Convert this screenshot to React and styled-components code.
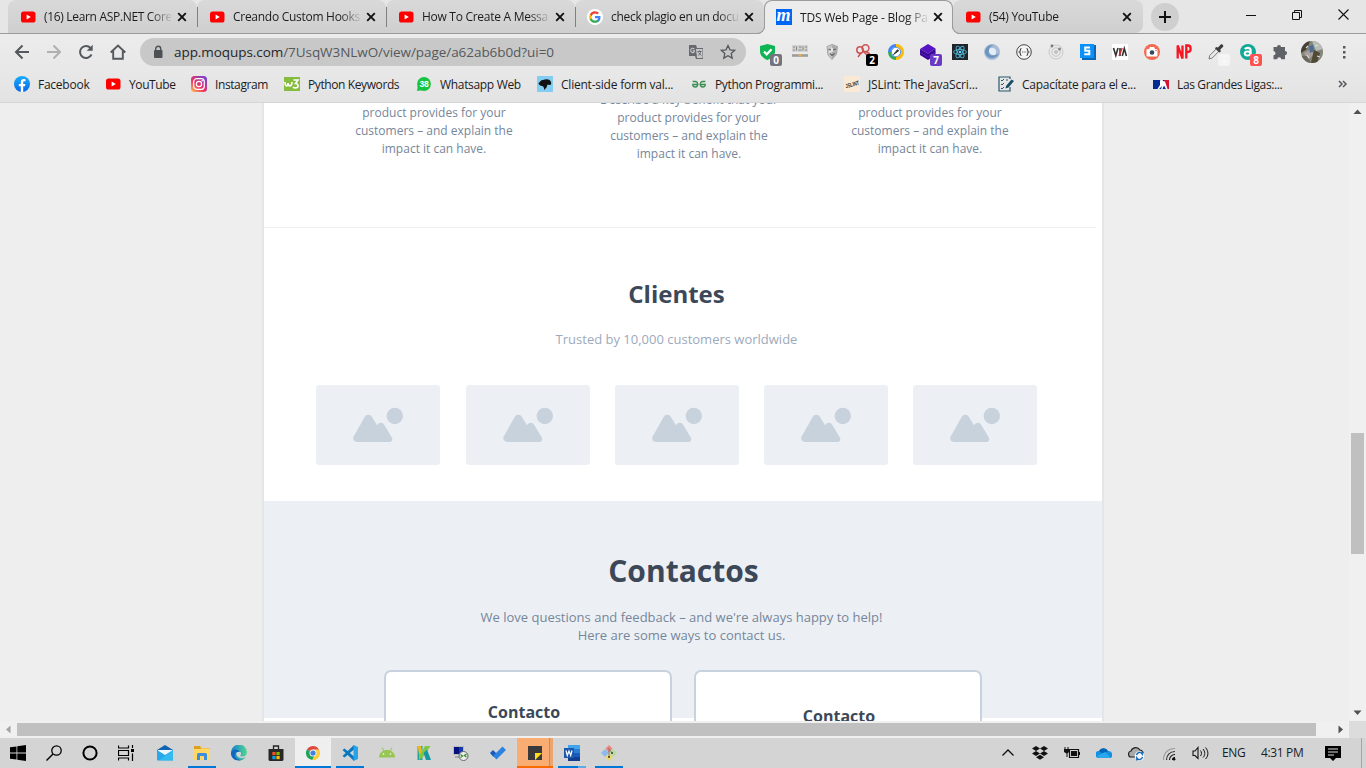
import React from "react";
import styled, { createGlobalStyle, css } from "styled-components";

const Global = createGlobalStyle`
  html, body { margin: 0; padding: 0; overflow: hidden; }
  *, *::before, *::after { box-sizing: border-box; }
  svg { display: block; flex: none; }
  h2, h3, p { margin: 0; }
`;

const ui = css`
  font-family: "Open Sans", "Noto Sans", sans-serif;
  font-size: 12px;
  color: #1c1c1e;
  white-space: nowrap;
`;

const Screen = styled.div`
  width: 1366px;
  height: 768px;
  display: flex;
  flex-direction: column;
  overflow: hidden;
  background: #eeeeee;
`;

/* ---------- tab strip ---------- */
const TabStrip = styled.div`
  ${ui}
  height: 34px;
  display: flex;
  flex: none;
  padding-left: 8px;
  background: #e6e6e6;
  box-shadow: inset 0 -1px #9b9b9b;
`;
const Tab = styled.div`
  position: relative;
  width: ${(p) => p.$w || 189}px;
  height: ${(p) => (p.$active ? 34 : 33)}px;
  display: flex;
  align-items: center;
  padding: 0 0 0 12px;
  background: ${(p) => (p.$active ? "#ececec" : "linear-gradient(#d9d9d9, #cfcfcf)")};
  border-radius: 8px 8px ${(p) => (p.$last ? "8px" : 0)} 0;
  ${(p) => p.$active && css`
    z-index: 2;
    border: 1px solid #9b9b9b;
    border-bottom: 0;
    padding: 0 0 1px 11px;
    &::before, &::after {
      content: "";
      position: absolute;
      bottom: 0;
      width: 8px;
      height: 8px;
      background: transparent;
    }
    &::before { left: -8px; border-right: 1px solid #9b9b9b; border-bottom: 1px solid #9b9b9b; border-radius: 0 0 8px 0; box-shadow: 3px 3px 0 1px #ececec; clip-path: inset(0 -1px 0 0); }
    &::after { right: -8px; border-left: 1px solid #9b9b9b; border-bottom: 1px solid #9b9b9b; border-radius: 0 0 0 8px; box-shadow: -3px 3px 0 1px #ececec; clip-path: inset(0 0 0 -1px); }
  `}
`;
const Divider = styled.i`
  position: absolute;
  z-index: 3;
  right: -1px;
  top: 7px;
  width: 1px;
  height: 20px;
  background: #808080;
`;
const TabTitle = styled.span`
  width: 127px;
  margin-left: 8px;
  overflow: hidden;
  letter-spacing: ${(p) => p.$ls || 0}px;
  mask-image: linear-gradient(90deg, #000 84%, transparent 102%);
`;
const TabClose = styled.span`
  display: flex;
  margin-left: 6px;
`;
const NewTab = styled.div`
  width: 28px;
  height: 28px;
  margin: 3px 0 0 8px;
  border-radius: 50%;
  background: #cfcfcf;
  display: grid;
  place-items: center;
`;
const WindowButtons = styled.div`
  margin-left: 49px;
  height: 29px;
  display: flex;
`;
const WindowButton = styled.div`
  width: 46px;
  display: grid;
  place-items: center;
`;

/* ---------- toolbar ---------- */
const Toolbar = styled.div`
  ${ui}
  height: 36px;
  flex: none;
  display: flex;
  align-items: center;
  padding-left: 6px;
  background: linear-gradient(#ececec, #e8e8e8);
`;
const Slot = styled.div`
  position: relative;
  width: ${(p) => p.$w || 32}px;
  height: ${(p) => p.$h || 32}px;
  flex: none;
  display: grid;
  place-items: center;
`;
const Extensions = styled.div`
  display: flex;
`;
const Omnibox = styled.div`
  width: 606px;
  height: 28px;
  margin: 0 6px;
  padding-left: 12px;
  border-radius: 14px;
  background: #c8c8c8;
  display: flex;
  align-items: center;
`;
const Url = styled.span`
  margin-left: 10px;
  width: 500px;
  font-size: 13.5px;
  line-height: 20px;
  padding-bottom: 1px;
  letter-spacing: ${(p) => p.$ls}px;
  color: #55585c;
  b { font-weight: 400; color: #252629; }
`;
const Badge = styled.span`
  position: absolute;
  left: 18px;
  top: 18px;
  width: 12px;
  height: 12px;
  border-radius: 2px;
  background: ${(p) => p.$bg};
  color: #fff;
  font: 700 10px/12px "Open Sans", sans-serif;
  text-align: center;
`;
const MoqupsMark = styled.span`
  width: 16px;
  height: 16px;
  background: #0067f4;
  color: #fff;
  font: italic 700 18px/13px "Liberation Serif", serif;
  text-align: center;
  text-indent: -1px;
`;

/* ---------- bookmarks ---------- */
const Bookmarks = styled.div`
  ${ui}
  height: 33px;
  flex: none;
  display: flex;
  align-items: center;
  padding: 0 0 5px 14px;
  background: linear-gradient(#e8e8e8, #e3e3e3);
  box-shadow: inset 0 -1px #d6d6d6;
`;
const Bookmark = styled.div`
  width: ${(p) => p.$w}px;
  display: flex;
  align-items: center;
  gap: 8px;
  flex: none;
  letter-spacing: ${(p) => p.$ls}px;
`;

/* ---------- page viewport ---------- */
const Viewport = styled.div`
  height: 618px;
  flex: none;
  display: flex;
  justify-content: space-between;
`;
const Canvas = styled.main`
  width: 842px;
  height: 618px;
  margin-left: 262px;
  overflow: hidden;
  background: #fff;
  border: solid #e3e5e7;
  border-width: 0 2px;
  font-family: "Open Sans", sans-serif;
  text-align: center;
  font-size: 13px;
  line-height: 18px;
`;
const Benefits = styled.section`
  width: 832px;
  height: 125px;
  border-bottom: 1px solid #eeeeee;
  display: flex;
  padding-left: 70px;
`;
const Benefit = styled.p`
  width: ${(p) => p.$w}px;
  margin-top: ${(p) => p.$top}px;
  font-size: 12px;
  line-height: 18px;
  color: #76869a;
  white-space: pre-line;
`;
const Clients = styled.section`
  height: 273px;
  padding: 46px 13px 0 0;
`;
const Title = styled.h2`
  font-weight: 700;
  color: #3c4858;
  font-size: ${(p) => p.$size}px;
  line-height: 40px;
  padding-left: ${(p) => p.$shift || 0}px;
`;
const Trusted = styled.p`
  margin-top: 16px;
  color: #9daabb;
`;
const Placeholders = styled.div`
  display: flex;
  gap: 25.25px;
  margin: 37px 0 0 52.4px;
`;
const Placeholder = styled.div`
  width: 124px;
  height: 80px;
  flex: none;
  border-radius: 3px;
  background: #ecf0f5;
  padding: 22px 0 0 36px;
`;
const Contacts = styled.section`
  height: 217px;
  background: #ecf0f5;
  padding-top: 50px;
`;
const Intro = styled.p`
  margin-top: 17px;
  padding-right: 3px;
  color: #76869a;
  white-space: pre-line;
`;
const Cards = styled.div`
  display: flex;
  gap: 22px;
  margin: 26px 0 0 120px;
`;
const Card = styled.article`
  width: 288px;
  height: 140px;
  flex: none;
  border: 2px solid #c8d2df;
  border-radius: 7px;
  background: #fff;
  padding: ${(p) => p.$pad};
`;
const CardTitle = styled.h3`
  font-size: 16px;
  line-height: 24px;
  font-weight: 700;
  color: #3c4858;
`;

/* ---------- scrollbars ---------- */
const VScroll = styled.div`
  width: 17px;
  height: 618px;
  background: #f0f0f0;
  display: flex;
  flex-direction: column;
  align-items: center;
`;
const HScroll = styled.div`
  height: 17px;
  flex: none;
  display: flex;
  align-items: center;
  background: #f0f0f0;
`;
const Thumb = styled.div`
  width: ${(p) => p.$w}px;
  height: ${(p) => p.$h}px;
  flex: none;
  background: #c0c0c0;
  margin: ${(p) => p.$m || 0};
`;
const Corner = styled.div`
  width: 17px;
  height: 17px;
  margin-left: auto;
  background: #dcdcdc;
`;

/* ---------- taskbar ---------- */
const Taskbar = styled.footer`
  ${ui}
  height: 30px;
  flex: none;
  display: flex;
  background: #d4d4d4;
`;
const Task = styled.div`
  position: relative;
  width: ${(p) => p.$w || 37}px;
  height: 30px;
  flex: none;
  display: grid;
  place-items: center;
`;
const Fill = styled.div`
  width: 36px;
  height: 30px;
  background: ${(p) => p.$bg};
  box-shadow: ${(p) => p.$edge || "none"};
  display: grid;
  place-items: center;
`;
const Underline = styled.i`
  position: absolute;
  bottom: 0;
  left: 50%;
  width: ${(p) => p.$w || 28}px;
  height: 2px;
  transform: translateX(-50%);
  background: ${(p) => p.$bg || "#0078d7"};
`;
const TraySpace = styled.div`
  width: 364px;
  flex: none;
`;
const TrayText = styled.span`
  width: ${(p) => p.$w}px;
  padding-left: ${(p) => p.$pl || 0}px;
  line-height: 30px;
  letter-spacing: ${(p) => p.$ls}px;
`;
const ShowDesktop = styled.i`
  width: 5px;
  margin-left: auto;
  border-left: 1px solid #a6a6a6;
`;

/* ---------- drawings ---------- */
const Svg = ({ s = 16, w, h, box, children, ...r }) => (
  <svg width={w || s} height={h || s} viewBox={box || `0 0 ${w || s} ${h || s}`} fill="none" {...r}>{children}</svg>
);
const YouTube = () => (
  <Svg><rect x="1" y="2.5" width="14.5" height="11" rx="2.6" fill="#f00" /><path d="M6.6 5.6 10.8 8l-4.2 2.4z" fill="#fff" /></Svg>
);
const Google = () => (
  <Svg s={16} box="1 1 22 22">
    <circle cx="12" cy="12" r="11" fill="#fff" />
    <path d="M19.6 12.2c0-.6-.1-1.100-.2-1.600H12v3.100h4.300c-.2 1-.8 1.900-1.600 2.400v2h2.600c1.500-1.400 2.300-3.400 2.300-5.900z" fill="#4285f4" />
    <path d="M12 20c2.200 0 4-.7 5.300-1.900l-2.600-2c-.7.5-1.600.8-2.700.8-2.100 0-3.800-1.400-4.500-3.300H4.800v2.100C6.200 18.300 8.900 20 12 20z" fill="#34a853" />
    <path d="M7.500 13.600a4.800 4.800 0 0 1 0-3.100V8.400H4.800a8 8 0 0 0 0 7.300z" fill="#fbbc05" />
    <path d="M12 7.200c1.200 0 2.300.4 3.100 1.200l2.300-2.300A8 8 0 0 0 4.800 8.400l2.700 2.100C8.200 8.600 9.900 7.200 12 7.200z" fill="#ea4335" />
  </Svg>
);
const Close = () => <Svg s={10}><path d="m1.200 1.200 7.600 7.600m0-7.600L1.200 8.800" stroke="#111" strokeWidth="1.900" /></Svg>;

const tabs = [
  { icon: <YouTube />, title: "(16) Learn ASP.NET Core", sep: true, ls: -0.32 },
  { icon: <YouTube />, title: "Creando Custom Hooks", sep: true, ls: -0.28 },
  { icon: <YouTube />, title: "How To Create A Messa", sep: true, ls: -0.28 },
  { icon: <Google />, title: "check plagio en un docu", ls: -0.3 },
  { icon: <MoqupsMark>m</MoqupsMark>, title: "TDS Web Page - Blog Pa", active: true, ls: -0.2 },
  { icon: <YouTube />, title: "(54) YouTube", last: true, ls: -0.3 },
];

const extensions = [
  [<Svg><path d="M7.500 0 15 2v5.500c0 4-3.500 7-7.500 8.500C3.500 14.500 0 11.500 0 7.500V2z" fill="#0fb455" /><path d="m4 7.500 2.700 2.800L11.500 5.300" stroke="#fff" strokeWidth="2.200" /></Svg>, "0", "#74747e"],
  [<Svg><rect y="1" width="16" height="7" fill="#d2d2d2" /><path d="M1 3h2M4.500 2.500v4M7 3h2.500M11 2.500v4M13 3h2M1 6h2M6.500 6h3M13 6h2" stroke="#858585" strokeWidth="1" /><path d="M0 11h16" stroke="#aaa" strokeWidth="2" /><path d="M0 12.200h16" stroke="#777" strokeWidth=".8" /><circle cx="8" cy="11.200" r="1.500" fill="#e5b045" /></Svg>],
  [<Svg><path d="M3 2.500 8 .5l5.500 2-1 7.500L8 15.500 4 11z" fill="#c9c9c9" stroke="#a3a3a3" /><path d="M8 1l5 2-1 7-4 5z" fill="#999" opacity=".6" /><path d="m4.500 5 2.500 1M9 6l3-1M6 9.500l2 2 2.500-2" stroke="#666" strokeWidth="1.200" /><path d="M5 8h2l1-4 1 4" stroke="#eee" /></Svg>],
  [<Svg><g stroke="#cb5353" strokeWidth="1.500"><circle cx="4" cy="6" r="3.200" /><circle cx="9.500" cy="4.200" r="3.400" /><path d="M5 9 2 13M7 7l4 4M10 7.500l4 2.500" /></g></Svg>, "2", "#000"],
  [<Svg><circle cx="8" cy="8" r="6.500" fill="#fff" /><path d="M8 1.500A6.500 6.500 0 0 1 14.500 8" stroke="#fbbc05" strokeWidth="3" /><path d="M14.500 8A6.500 6.500 0 0 1 8 14.500" stroke="#fbbc05" strokeWidth="3" /><path d="M8 14.500A6.500 6.500 0 0 1 1.500 8" stroke="#35a853" strokeWidth="3" /><path d="M1.500 8A6.500 6.500 0 0 1 8 1.500" stroke="#4285f4" strokeWidth="3" /><circle cx="8" cy="8" r="5" fill="#4285f4" /><circle cx="8" cy="8" r="4.200" fill="#fff" /><path d="m5.500 10.500 4-4.800 1.200 1.100z" fill="#333" stroke="#333" /></Svg>],
  [<Svg><path d="m0 5 8-5 7.500 4.500-7.500 5z" fill="#5712c4" /><path d="m0 5 8 4.500 7.500-5v6L8 16 0 11z" fill="#390a93" /><path d="m0 8.500 8 4.500 7.500-5" stroke="#5712c4" /></Svg>, "7", "#6a3ac4"],
  [<Svg><rect width="16" height="16" fill="#20232a" /><g stroke="#51b6d3" strokeWidth=".9"><ellipse cx="8" cy="8" rx="6.500" ry="2.500" /><ellipse cx="8" cy="8" rx="6.500" ry="2.500" transform="rotate(60 8 8)" /><ellipse cx="8" cy="8" rx="6.500" ry="2.500" transform="rotate(120 8 8)" /></g><circle cx="8" cy="8" r="1.300" fill="#61dafb" /></Svg>],
  [<Svg><circle cx="8" cy="8" r="6" stroke="#a7bdd6" strokeWidth="4" /><path d="M2 11a7 7 0 0 1 8-10c-5 1-6 6-4 8 2 3 6 3 9 0-1 4-8 8-13 2z" fill="#5684b5" opacity=".75" /><circle cx="8.500" cy="7.500" r="3.200" fill="#e4edf5" /></Svg>],
  [<Svg><circle cx="8" cy="8" r="7.300" fill="#f5f5f5" stroke="#444" /><path d="M5.500 4.500c-2 0-.5 3-2 3.500 1.500.5 0 3.500 2 3.500m5-7c2 0 .5 3 2 3.500-1.500.5 0 3.500-2 3.500M6 8h.8M7.700 8h.8M9.400 8h.8" stroke="#444" strokeWidth="1.200" /></Svg>],
  [<Svg><circle cx="8" cy="8" r="7" stroke="#c8c8c8" /><circle cx="8" cy="8" r="4.200" stroke="#c4c4c4" /><circle cx="8" cy="8" r="2" fill="#c1c1c1" /><circle cx="4" cy="2" r="1.400" fill="#777" /><circle cx="11.500" cy="5" r="1.500" fill="#888" /></Svg>],
  [<Svg><path d="M13 1h3v15H2v-3z" fill="#0868b7" /><rect width="14" height="14" fill="#0c91f8" /><path d="M10 3.500H5.200v3.200h4.100v3.500H4.300" stroke="#fff" strokeWidth="2" /></Svg>],
  [<Svg><rect width="16" height="16" rx="1" fill="#fff" /><path d="m1.500 4 2.300 7.500L6 4M8 4v8M10.300 12l2-7.500 2.100 7.500" stroke="#333" strokeWidth="1.600" /><path d="m7 12 3.200-8" stroke="#da2830" strokeWidth="1.400" /></Svg>],
  [<Svg><circle cx="8" cy="8" r="8" fill="#f36a50" /><rect x="2.500" y="5" width="11" height="7.500" rx="1" fill="#fff" /><path d="M5 5 6 3h4l1 2z" fill="#fff" /><circle cx="8" cy="8.500" r="2.300" fill="#34495e" /><circle cx="12" cy="6.500" r=".8" fill="#f36a50" /></Svg>],
  [<Svg><path d="M1.700 14.500v-13l4.800 13v-13M10.300 14.500v-13h1.700c3.500 0 3.500 6.500 0 6.500h-1.700" stroke="#f51622" strokeWidth="2.300" /></Svg>],
  [<Svg><path d="m1 15 .7-3.500 7-7 2.500 2.500-7 7z" fill="#e9e9e9" stroke="#777" /><path d="m8 3 2 .5L12.500.7c1.500-1.500 3.800.9 2.400 2.400l-2.600 2.500.5 2-1.500 1L7 4.500z" fill="#3d3d3d" /></Svg>, "-", "#f4f4f4"],
  [<Svg><circle cx="8" cy="8" r="8" fill="#10a898" /><path d="M4.800 5c2-2 5.800-1.500 5.800 1.500V12" stroke="#fff" strokeWidth="2.200" /><ellipse cx="7.500" cy="9.500" rx="2.800" ry="2" stroke="#fff" strokeWidth="2" /></Svg>, "8", "#fb5252"],
  [<Svg><path d="M5 3a2 2 0 0 1 4 0h4v4a2.100 2.100 0 0 1 0 4.200v4h-3.800a2 2 0 0 0-4 0H1.500v-4a2 2 0 0 0 0-4V3z" fill="#5f6368" /></Svg>],
];

const bookmarks = [
  { w: 91, ls: -0.25, t: "Facebook", i: <Svg><defs><linearGradient id="fb" x2="0" y2="1"><stop stopColor="#19afff" /><stop offset="1" stopColor="#0866e8" /></linearGradient></defs><circle cx="8" cy="8" r="8" fill="url(#fb)" /><path d="M6.800 16v-5.700h-2V8h2V6.300c0-2.100 1.200-3.200 3-3.200l1.700.2v1.900h-1c-1 0-1.300.6-1.300 1.200V8h2.200l-.4 2.300H9.200V16z" fill="#fff" /></Svg> },
  { w: 86, ls: -0.4, t: "YouTube", i: <YouTube /> },
  { w: 93, ls: -0.4, t: "Instagram", i: <Svg><defs><linearGradient id="ig" x1="0" y1="1" x2=".9" y2="0"><stop stopColor="#ffc64f" /><stop offset=".45" stopColor="#ed3265" /><stop offset="1" stopColor="#6944d9" /></linearGradient></defs><rect width="16" height="16" rx="3.500" fill="url(#ig)" /><rect x="2.700" y="2.700" width="10.600" height="10.600" rx="3" stroke="#fff" strokeWidth="1.200" /><circle cx="8" cy="8" r="2.600" stroke="#fff" strokeWidth="1.200" /><circle cx="11.200" cy="4.800" r=".8" fill="#fff" /></Svg> },
  { w: 132, ls: -0.4, t: "Python Keywords", i: <Svg><rect y="1" width="16" height="14" fill="#87bd3f" /><path d="M1 6c0 5 3 5 3 1 0 4 4 4 4-1m1.500-2h4.500l-2.500 3.500c3.500 0 3.500 4.500-.2 4.500-1 0-1.800-.4-2.200-1.200" stroke="#fff" strokeWidth="1.600" /></Svg> },
  { w: 121, ls: -0.32, t: "Whatsapp Web", i: <Svg><path d="M2 9 1 15l6-1z" fill="#15c541" /><circle cx="8" cy="8" r="6.900" fill="#15c541" /><text x="8" y="10.900" textAnchor="middle" fill="#fff" fontSize="8.500" fontWeight="700" fontFamily="Liberation Sans">38</text></Svg> },
  { w: 154, ls: -0.22, t: "Client-side form val...", i: <Svg><rect width="16" height="16" fill="#83cdf1" /><path d="M1.500 7.500C3 6 3.500 4 6 4c2-1 5-1.200 6.500 0 1.500 1 2 3 1.500 4.500l-2 .5-1.500-.5-1 3-2.500 2.500C7.500 11.500 6 10 5 10 3.500 10 2 9 1.500 7.500z" fill="#111" /></Svg> },
  { w: 153, ls: -0.35, t: "Python Programmi...", i: <Svg><path d="M7.500 8.500H1.200m13.600 0H8.500M1.700 5.500h2.500c3.500 0 3 5.500.2 5.500-1.800 0-2.700-1-2.700-2.500m12.600-3h-2.500c-3.500 0-3 5.500-.2 5.500 1.800 0 2.700-1 2.700-2.500" stroke="#398d50" strokeWidth="1.300" /></Svg> },
  { w: 154, ls: -0.15, t: "JSLint: The JavaScri...", i: <Svg><rect width="16" height="16" fill="#faead5" /><text x="8" y="10.500" textAnchor="middle" transform="rotate(-16 8 8)" fill="#3b332c" fontSize="6" fontWeight="700" fontFamily="Liberation Sans" textLength="14" lengthAdjust="spacingAndGlyphs">JSLINT</text></Svg> },
  { w: 155, ls: -0.26, t: "Capacítate para el e...", i: <Svg><path d="M12 3V1H1v14h11v-4" stroke="#28596b" strokeWidth="1.200" /><path d="m3 4 1 1 2-2M3 8l1 1 2-2M3 12l1 1 2-2M8 4h2" stroke="#28596b" /><path d="m8 10 5.500-6.500L16 5l-5.500 6.500-3 1z" fill="#174f65" /></Svg> },
  { w: 160, ls: -0.37, t: "Las Grandes Ligas:...", i: <Svg><rect y="4" width="16" height="9" fill="#002d91" /><path d="M11 4h5v9h-2z" fill="#d51532" /><path d="M7 5.500a1.500 1.500 0 0 1 3-.5l2 .5.5 1.500 2 6h-1.500L11 9.500 9.500 13H8.200L9 10l-3 3H4.500L7 9z" fill="#fff" /></Svg> },
];

const Arrow = ({ d, c = "#505050" }) => <Svg s={17}><path d={d} fill={c} /></Svg>;
const Mountains = () => (
  <Svg w={52} h={36}>
    <path d="M1.700 29.500 12.500 10.200c1.800-3.200 5.800-3.200 7.600 0L25 18.300c2-3.100 5.500-3.300 7.300-.3l7.500 12.500c1.400 2.500-.3 4.500-2.300 4.500h-32C2 35 .2 32 1.700 29.500z" fill="#c8d2dd" />
    <circle cx="42.800" cy="9" r="8.200" fill="#c8d2dd" />
  </Svg>
);
const benefit = "product provides for your\ncustomers – and explain the\nimpact it can have.";

const ChromeLogo = () => <Svg><circle cx="8" cy="8" r="7" fill="#fff" /><path d="M8 8 1.900 4.500A7 7 0 0 1 14.200 4.700H8z" fill="#df4a3e" /><path d="M8 8h0L1.900 4.500A7 7 0 0 0 7.400 15L10 10z" fill="#20a35a" /><path d="M10 10 7.400 15A7 7 0 0 0 14.200 4.700H8z" fill="#fdcd3d" /><circle cx="8" cy="8" r="3.500" fill="#f4f4f4" /><circle cx="8" cy="8" r="2.600" fill="#3f7fe8" /></Svg>;

const tasks = [
  { w: 36, i: <Svg><path d="M0 2.300 6.500 1.400v6.200H0zm7.300-1L16 0v7.600H7.300zM0 8.400h6.500v6.200L0 13.700zm7.300 0H16V16l-8.700-1.200z" fill="#000" /></Svg> },
  { w: 36, i: <Svg><circle cx="10.500" cy="5.500" r="4.700" stroke="#000" strokeWidth="1.300" /><path d="M7 9 .5 15.500" stroke="#000" strokeWidth="1.400" /></Svg> },
  { w: 36, i: <Svg><circle cx="8" cy="8" r="6.600" stroke="#000" strokeWidth="2" /></Svg> },
  { w: 36, i: <Svg><path d="M.5.500V3h10V.5M.5 15.500V13h10v2.500M.5 5.500h10v5H.5zM14.500 0v3M14.500 8.500V16" stroke="#000" strokeWidth="1.200" /><path d="M13 4h3v3h-3z" fill="#000" /></Svg> },
  { w: 41, i: <Svg><path d="M0 5 8 0l8 5v10H0z" fill="#0f63b1" /><path d="M1 5h14v6H1z" fill="#edf7fc" /><path d="m0 5 8 5 8-5v10.500H0z" fill="#28a8ea" /><path d="M16 5v10.500H2z" fill="#38c2f2" opacity=".7" /></Svg> },
  { w: 34, u: 1, i: <Svg><path d="M0 1h6l2 2h8v12H0z" fill="#f4c34c" /><path d="M0 1h6l1 3H0z" fill="#dda01d" /><path d="M0 4h16v11H0z" fill="#ffd867" /><path d="M3 9.500A1.500 1.500 0 0 1 4.500 8h7A1.500 1.500 0 0 1 13 9.500V15h-3v-4H6v4H3z" fill="#3b8edb" /></Svg> },
  { w: 40, i: <Svg><defs><linearGradient id="edge" x2="1"><stop stopColor="#1380d5" /><stop offset="1" stopColor="#54d68c" /></linearGradient></defs><path d="M0 8a8 8 0 0 1 16-1c0 3-2 4.500-5 4.500-2 0-2-1-1-2 .6-2-1-3-2.500-3C4 6.500 4.500 13 10.500 13c2 0 3-.5 4-1A8 8 0 0 1 0 8z" fill="url(#edge)" /><path d="M0 8c1.500-5 7.500-4 9-1-3-1-5 1-5 3.500 0 2 2 4 5 4.500 2.500 0 4-1.500 5.500-3C10 18 0 16 0 8z" fill="#1268bd" /></Svg> },
  { w: 34, i: <Svg><path d="M5.500 4V1h5v3" stroke="#222" strokeWidth="1.300" /><path d="M.5 4h15v11l-1 1h-13l-1-1z" fill="#282828" /><path d="M4.300 7h3.300v3.200H4.300z" fill="#f25022" /><path d="M8.400 7h3.300v3.200H8.400z" fill="#7fba00" /><path d="M4.300 11h3.300v3.200H4.300z" fill="#00a4ef" /><path d="M8.400 11h3.300v3.200H8.400z" fill="#ffb900" /></Svg> },
  { w: 40, bg: "#efefef", u: 36, i: <ChromeLogo /> },
  { w: 34, u: 1, i: <Svg><path d="M12 0v4.500L2.500 12.500.5 11zM.5 5l2-1.500L12 11.500V16z" fill="#0877bf" /><path d="m11.500 0 4.500 2v12l-4.500 2z" fill="#27a4e7" /></Svg> },
  { w: 40, i: <Svg><path d="M0 12.500c0-10 16-10 16 0z" fill="#97c653" /><path d="m3 2.500 2 3.500m8-3.500-2 3.500" stroke="#97c653" /><circle cx="4.500" cy="9" r=".8" fill="#fff" /><circle cx="11.500" cy="9" r=".8" fill="#fff" /></Svg> },
  { w: 34, i: <Svg><path d="M1.500 1h5v14h-5z" fill="#24a39a" /><path d="M1.500 1H5l1.500 7-3 3z" fill="#e9b928" /><path d="M9 1h5.500L7 12l-4 3v-4z" fill="#7fc942" /><path d="M7.500 8 11 4.500 15 15h-5z" fill="#1698a2" /></Svg> },
  { w: 40, i: <Svg><rect x=".5" y="1.500" width="10" height="8" fill="#173aaa" stroke="#bbb" /><path d="M1 2h5v7H1z" fill="#07107f" /><path d="M2 11h8v2H2z" fill="#aaa" /><circle cx="10.500" cy="11" r="4.500" fill="#eee" stroke="#666" /><path d="m7.500 9.500 2 1.500-2 1.500m6-3.500-2 1.500 2 1.500" stroke="#388b2c" strokeWidth="1.300" /></Svg> },
  { w: 34, i: <Svg><path d="m0 8 3-3 4 4-3.500 3z" fill="#185abd" /><path d="m3 11 9.500-9.500 3.500 3.500-9.500 9.500z" fill="#2e82df" /></Svg> },
  { w: 40, bg: "#f9ad73", edge: "inset -3px 0 #eca56e, inset -4px 0 #c98a59", ub: "#f76b00", u: 36, i: <Svg s={14}><path d="M0 0h14v7l-7 7H0z" fill="#3a3a3a" /><path d="M14 7v7H7z" fill="#3a3a3a" /><path d="M7 14V7h7z" fill="#ffdd19" /></Svg> },
  { w: 34, u: 1, ub: "linear-gradient(90deg,#0078d7 20px,#5ca9e4 20px)", i: <Svg><path d="M4 0h12v16H4z" fill="#2b7cd3" /><path d="M4 0h12v4H4z" fill="#41a5ee" /><path d="M4 8h12v4H4z" fill="#185abd" /><path d="M4 12h12v4H4z" fill="#103f91" /><path d="M0 3h10v10H0z" fill="#1e58ad" /><path d="m2 5.500 1.300 5L5 6l1.700 4.500L8 5.500" stroke="#fff" strokeWidth="1.200" /></Svg> },
  { w: 39, u: 1, i: <Svg><path d="m8 0 3.500 3.500-3.500 4-3.500-4z" fill="#ef847e" /><path d="m4 4 4 4-4 4-4-4z" fill="#8db9eb" /><path d="m12 4 4 4-4 4-4-4z" fill="#b7dba2" /><path d="m8 8.500 4 3.800L8 16l-4-3.700z" fill="#eada72" /><path d="m7 3 4 4.500M8 5v7" stroke="#756b66" strokeWidth=".8" /><circle cx="11" cy="8" r="1" fill="#433" /><circle cx="8" cy="12" r="1" fill="#433" /></Svg> },
];

const tray = [
  { w: 32, i: <Svg><path d="m2.500 10.500 5.500-5.500 5.500 5.500" stroke="#111" strokeWidth="1.300" /></Svg> },
  { w: 32, i: <Svg><path d="m4 1 4 2.500L4 6 0 3.500zm8 0 4 2.500L12 6 8 3.500zM4 6l4 2.500L4 11 0 8.500zm8 0 4 2.500-4 2.500-4-2.500zM8 9.800l4 2.500L8 14.800l-4-2.500z" fill="#111" /></Svg> },
  { w: 32, i: <Svg><path d="M5.500 4.500h9v8h-9z" stroke="#111" strokeWidth="1.200" /><path d="M7 6h6v5H7z" fill="#111" /><path d="M15 7h1v3h-1zM0 4h5v3L3.500 8.500V12h-1V8.500L0 7z" fill="#111" /><path d="M1 2v2m3-2v2" stroke="#111" /></Svg> },
  { w: 32, i: <Svg><path d="M3 6a5 5 0 0 1 9 0 4 4 0 0 1 3 7H3a3.500 3.500 0 0 1 0-7z" fill="#1490df" /><path d="M3 6a5 5 0 0 1 9 0l-5 3z" fill="#0364b8" /><path d="m1 11 8-4 6 6H3z" fill="#28a8ea" /></Svg> },
  { w: 32, i: <Svg><path d="M3 6a5 5 0 0 1 9-1c3 0 5 6 2 7H3C0 12-.5 6.500 3 6z" fill="#aaa" stroke="#222" strokeWidth="1.200" /><circle cx="11.500" cy="11" r="4.800" fill="#f4f8fc" /><path d="M8.500 10c.8-3 4-3.500 5.700-1V6.500M14.500 12c-.8 3-4 3.500-5.700 1v2.500" stroke="#1769b5" strokeWidth="1.400" /></Svg> },
  { w: 34, i: <Svg><g strokeWidth="1.100"><path d="M2.500 15C2.500 8 7 3.500 14 3.500" stroke="#999" /><path d="M5.500 15C5.500 10 9 6.500 14 6.500" stroke="#333" /><path d="M8.500 15c0-3 2.500-5.500 5.500-5.500M11.500 15c0-1.500 1-2.500 2.500-2.500" stroke="#111" /></g><circle cx="13" cy="14.200" r="1.400" fill="#111" /></Svg> },
  { w: 28, i: <Svg w={17} h={16}><path d="M1 6h2l3-3.500v11L3 10.500H1z" stroke="#111" strokeWidth="1.100" /><path d="M8.500 5.500c1.300 1.500 1.300 4 0 5.500M11 4c2.300 2.500 2.300 6.500 0 8.500M13.500 2.500c3.200 3.500 3.200 8.500 0 11.500" stroke="#111" /></Svg> },
];

export default function App() {
  return (
    <Screen>
      <Global />
      <TabStrip>
        {tabs.map((t, k) => (
          <Tab key={k} $active={t.active} $last={t.last} $w={t.last ? 190 : 189}>
            {t.icon}
            <TabTitle $ls={t.ls}>{t.title}</TabTitle>
            <TabClose><Close /></TabClose>
            {t.sep && <Divider />}
          </Tab>
        ))}
        <NewTab><Svg s={14}><path d="M7 1v12M1 7h12" stroke="#111" strokeWidth="2" /></Svg></NewTab>
        <WindowButtons>
          <WindowButton><Svg s={10}><path d="M0 5.500h10" stroke="#111" /></Svg></WindowButton>
          <WindowButton><Svg s={10}><path d="M.5 2.500h7v7h-7zM2.500 2V.5h7v7H8" stroke="#111" /></Svg></WindowButton>
          <WindowButton><Svg s={11}><path d="m.5.500 10 10m0-10-10 10" stroke="#111" strokeWidth="1.100" /></Svg></WindowButton>
        </WindowButtons>
      </TabStrip>

      <Toolbar>
        <Slot><Svg><path d="M15 8H2m6.500-6.500L2 8l6.500 6.500" stroke="#55585c" strokeWidth="2" /></Svg></Slot>
        <Slot><Svg><path d="M1 8h13M7.500 1.500 14 8l-6.500 6.500" stroke="#b0b0b0" strokeWidth="2" /></Svg></Slot>
        <Slot><Svg><path d="M13.500 10.500A6 6 0 1 1 12.500 4" stroke="#55585c" strokeWidth="2" /><path d="M14.700.8v6H8.700z" fill="#55585c" /></Svg></Slot>
        <Slot><Svg><path d="M.7 8.500 8 1.500l7.300 7M3.200 7v7.800h9.600V7" stroke="#55585c" strokeWidth="1.900" /></Svg></Slot>
        <Omnibox>
          <Svg w={12} h={14}><rect x="2" y="5" width="8.500" height="8" rx="1" fill="#4d5054" /><path d="M3.700 5.500V3.700a2.500 2.500 0 0 1 5 0v1.800" stroke="#4d5054" strokeWidth="1.400" /></Svg>
          <Url $ls={-0.06}><b>app.moqups.com</b>/7UsqW3NLwO/view/page/a62ab6b0d?ui=0</Url>
          <Slot $w={44}><Svg><path d="M1 1h7l1 3h6v11H8l-1-3H1z" fill="#66696d" /><path d="M8 5h6.500v9H9z" fill="#c8c8c8" /><path d="M6.300 5.200C5 3.500 2.700 4 2.700 6.500s3.600 3 3.800.3H4.700" stroke="#c8c8c8" strokeWidth="1.100" /><path d="M9.500 7.500h4m-2-1v1m1.300 0c-.5 2-1.500 3-2.500 4m0-3 3 3" stroke="#66696d" /></Svg></Slot>
          <Slot $w={20}><Svg><path d="m8 1.500 2 4.300 4.700.5-3.500 3.200 1 4.600L8 11.700l-4.200 2.400 1-4.600L1.300 6.300 6 5.800z" stroke="#55585c" strokeWidth="1.300" /></Svg></Slot>
        </Omnibox>
        <Extensions>
          {extensions.map(([icon, n, bg], k) => (
            <Slot key={k}>{icon}{n && <Badge $bg={bg}>{n}</Badge>}</Slot>
          ))}
        </Extensions>
        <Slot>
          <Svg s={22}><clipPath id="face"><circle cx="11" cy="11" r="11" /></clipPath><g clipPath="url(#face)"><rect width="22" height="22" fill="#85857c" /><path d="M0 0h9l-3 8-6 4z" fill="#433f37" /><path d="M11 0h11v8l-7 2z" fill="#b7beb7" /><path d="m3 12 6-3 4 4-6 6z" fill="#aaa09a" /><path d="m13 9 6 3-3 10h-6z" fill="#504a35" /><path d="m8 5 4-1 1 6-4 2z" fill="#486d99" /><path d="m0 15 6 0 4 7H0z" fill="#6b685e" /><path d="m14 5 3-1m-11 10 2 3m8-2 3 1M5 7l2-2" stroke="#ddd" strokeWidth="1.200" /></g></Svg>
        </Slot>
        <Slot><Svg><path d="M7 2h2.500v2.500H7zM7 7h2.500v2.500H7zM7 12h2.500v2.500H7z" fill="#55585c" /></Svg></Slot>
      </Toolbar>

      <Bookmarks>
        {bookmarks.map((b) => <Bookmark key={b.t} $w={b.w} $ls={b.ls}>{b.i}{b.t}</Bookmark>)}
        <Slot $w={60} $h={16}><Svg s={10}><path d="m1 2 3 3-3 3m4-6 3 3-3 3" stroke="#55585c" strokeWidth="1.500" /></Svg></Slot>
      </Bookmarks>

      <Viewport>
        <Canvas>
          <Benefits>
            <Benefit $w={200} $top={1}>{benefit}</Benefit>
            <Benefit $w={310} $top={-12}>{"Describe a key benefit that your\n" + benefit}</Benefit>
            <Benefit $w={172} $top={1}>{benefit}</Benefit>
          </Benefits>
          <Clients>
            <Title $size={24}>Clientes</Title>
            <Trusted>Trusted by 10,000 customers worldwide</Trusted>
            <Placeholders>
              {[0, 1, 2, 3, 4].map((n) => <Placeholder key={n}><Mountains /></Placeholder>)}
            </Placeholders>
          </Clients>
          <Contacts>
            <Title $size={30} $shift={1}>Contactos</Title>
            <Intro>{"We love questions and feedback – and we're always happy to help!\nHere are some ways to contact us."}</Intro>
            <Cards>
              <Card $pad="28px 8px 0 0"><CardTitle>Contacto</CardTitle></Card>
              <Card $pad="32px 0 0 2px"><CardTitle>Contacto</CardTitle></Card>
            </Cards>
          </Contacts>
        </Canvas>
        <VScroll>
          <Arrow d="m4.500 11 4-4.500 4 4.500z" />
          <Thumb $w={13} $h={121} $m="313px 0 auto" />
          <Arrow d="m4.500 6.500 4 4.500 4-4.500z" />
        </VScroll>
      </Viewport>
      <HScroll>
        <Arrow d="m10.500 4.500-4.500 4 4.500 4z" c="#a3a3a3" />
        <Thumb $w={1299} $h={13} />
        <Slot $w={16} $h={17} />
        <Arrow d="m6.500 4.500 4.500 4-4.500 4z" />
        <Corner />
      </HScroll>

      <Taskbar>
        {tasks.map((t, k) => (
          <Task key={k} $w={t.w}>
            {t.bg ? <Fill $bg={t.bg} $edge={t.edge}>{t.i}</Fill> : t.i}
            {t.u && <Underline $w={t.u > 1 ? t.u : 28} $bg={t.ub} />}
          </Task>
        ))}
        <TraySpace />
        {tray.map((t, k) => <Task key={k} $w={t.w}>{t.i}</Task>)}
        <TrayText $w={47} $pl={8} $ls={-0.35}>ENG</TrayText>
        <TrayText $w={56} $ls={-0.35}>4:31 PM</TrayText>
        <Task $w={32}><Svg><path d="M0 1h16v12h-5l-3 3-3-3H0z" fill="#000" /><path d="M3 4h10M3 7h10M3 10h6" stroke="#ddd" /></Svg></Task>
        <ShowDesktop />
      </Taskbar>
    </Screen>
  );
}
